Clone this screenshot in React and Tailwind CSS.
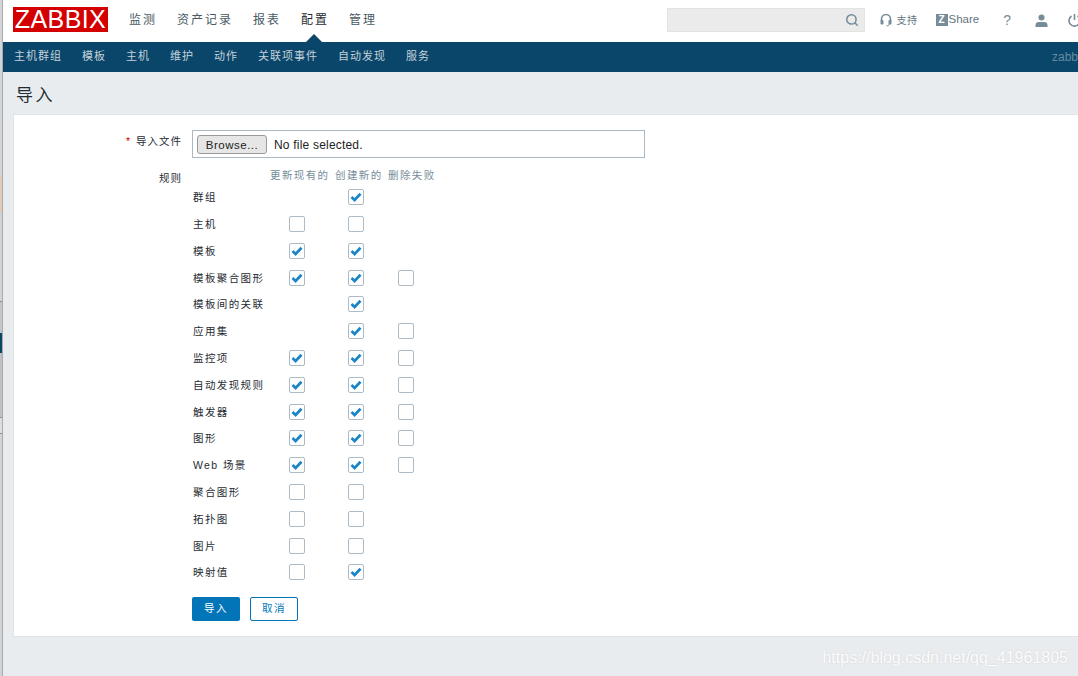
import { Search } from 'lucide-react';

const cjk = 'font-["Liberation_Sans","Noto_Sans_CJK_SC",sans-serif]';

const topNav = [
    { label: '监测' },
    { label: '资产记录' },
    { label: '报表' },
    { label: '配置', active: true },
    { label: '管理' },
];

const subNav = ['主机群组', '模板', '主机', '维护', '动作', '关联项事件', '自动发现', '服务'];

// null = no checkbox in that column
const rules = [
    ['群组', null, true, null],
    ['主机', false, false, null],
    ['模板', true, true, null],
    ['模板聚合图形', true, true, false],
    ['模板间的关联', null, true, null],
    ['应用集', null, true, false],
    ['监控项', true, true, false],
    ['自动发现规则', true, true, false],
    ['触发器', true, true, false],
    ['图形', true, true, false],
    ['Web 场景', true, true, false],
    ['聚合图形', false, false, null],
    ['拓扑图', false, false, null],
    ['图片', false, false, null],
    ['映射值', false, true, null],
];

const Checkbox = ({ checked, className }) => (
    <div className={`w-4 h-4 mb-[2px] bg-white border border-[#acbbc5] rounded-[2px] flex items-center justify-center ${className}`}>
        {checked && (
            <svg width="12" height="10" viewBox="0 0 12 10">
                <path d="M1.5 5 L4.6 8 L10.5 1.8" fill="none" stroke="#1a86c8" strokeWidth="2.7" />
            </svg>
        )}
    </div>
);

const LeftStrip = () => (
    <div className="w-[3px] shrink-0 h-full flex flex-col bg-[#c6c8ca] border-r border-[#a8aaac]">
        <div className="h-[177px] bg-[#d4d5d6]" />
        <div className="h-[36px] bg-[#e2cdb4]" />
        <div className="h-[88px] bg-[#d2d3d4]" />
        <div className="h-px bg-[#8f9192]" />
        <div className="h-[31px] bg-[#c4c6c8]" />
        <div className="h-[20px] bg-[#0c4566]" />
        <div className="h-[64px] bg-[#bfc1c3]" />
        <div className="h-px bg-[#8f9192]" />
        <div className="h-[15px] bg-[#dcdedf]" />
        <div className="h-px bg-[#8f9192]" />
        <div className="flex-1 bg-[#d2d3d4]" />
    </div>
);

const Header = () => (
    <div className="h-[42px] shrink-0 bg-white flex items-center pl-[10px] relative">
        <div className="w-[95px] h-[25px] mb-[3px] bg-[#d40000] text-white text-[25px] leading-[25px] text-center tracking-[0.4px] font-['Liberation_Sans',sans-serif]">
            ZABBIX
        </div>
        <div className={`flex gap-[20px] ml-[21px] pb-[2px] text-[12px] tracking-[2px] text-[#4a5a63] ${cjk}`}>
            {topNav.map((item) => (
                <span key={item.label} className={item.active ? 'text-[#1f2c33]' : ''}>{item.label}</span>
            ))}
        </div>
        {/* caret over the active menu item */}
        <div className="absolute left-[303px] bottom-0 w-0 h-0 border-x-[8px] border-x-transparent border-b-[8px] border-b-[#0a466a]" />

        <div className="ml-auto flex items-center mb-[2px]">
            <div className="w-[198px] h-[24px] bg-[#ebebeb] border border-[#e3e3e3] flex items-center justify-end pr-[5px]">
                <Search size={14} strokeWidth={2.6} className="text-[#768d99]" />
            </div>
            <svg className="ml-[15px]" width="12" height="14" viewBox="0 0 12 14">
                <path d="M1.5 8 V6 a4.5 4.5 0 0 1 9 0 V8" fill="none" stroke="#768d99" strokeWidth="1.6" />
                <rect x="0.5" y="7" width="3" height="4.5" rx="1" fill="#768d99" />
                <rect x="8.5" y="7" width="3" height="4.5" rx="1" fill="#768d99" />
                <path d="M9.5 11 Q9 13 6.5 13" fill="none" stroke="#768d99" strokeWidth="1" />
            </svg>
            <span className={`ml-[5px] text-[10px] tracking-[0.5px] text-[#5f7480] ${cjk}`}>支持</span>
            <div className="ml-[18px] w-[12px] h-[12px] bg-[#768d99] text-white text-[10px] leading-[12px] font-bold text-center font-['Liberation_Sans',sans-serif]">Z</div>
            <span className="ml-px text-[11.5px] text-[#5f7480] font-['Liberation_Sans',sans-serif]">Share</span>
            <span className="ml-[24px] text-[14px] text-[#768d99] font-['Liberation_Sans',sans-serif]">?</span>
            <svg className="ml-[24px]" width="13" height="13" viewBox="0 0 13 13">
                <circle cx="6.5" cy="3.5" r="3" fill="#768d99" />
                <path d="M0.5 13 V11 Q0.5 8.2 4 8 H9 Q12.5 8.2 12.5 11 V13 Z" fill="#768d99" />
            </svg>
            <div className="ml-[20px] w-[10px] overflow-hidden shrink-0">
                <svg width="13" height="14" viewBox="0 0 13 14">
                    <path d="M3.5 3 A5.5 5.5 0 1 0 9.5 3 M6.5 1 V7" fill="none" stroke="#768d99" strokeWidth="1.6" />
                </svg>
            </div>
        </div>
    </div>
);

const SubNav = () => (
    <div className="h-[30px] shrink-0 bg-[#0a466a] flex items-center pl-[11px]">
        <div className={`flex gap-[20px] pb-[2px] text-[11px] tracking-[1px] text-[#c4d2da] ${cjk}`}>
            {subNav.map((label) => (
                <span key={label}>{label}</span>
            ))}
        </div>
        <div className="ml-auto w-[26px] overflow-hidden text-[12px] text-[#668aa0] font-['Liberation_Sans',sans-serif]">zabbix</div>
    </div>
);

const ImportForm = () => (
    <div className="h-[523px] ml-[10px] bg-white border border-r-0 border-[#dfe4e7] pt-[15px] flex">
        <div className={`w-[168px] shrink-0 flex flex-col items-end text-[10.5px] tracking-[1px] text-[#1f2c33] ${cjk}`}>
            <div className="h-[28px] flex items-center pb-[4px]">
                <span className="text-[#d40000] mr-[5px]">*</span>导入文件
            </div>
            <div className="mt-[13px]">规则</div>
        </div>
        <div className="ml-[10px] flex flex-col">
            <div className="w-[453px] h-[28px] border border-[#a9b8c2] flex items-center pl-[4px]">
                <div className="w-[70px] h-[19px] bg-[#e6e6e6] border border-[#9a9a9a] rounded-[3px] text-[11.5px] tracking-[0.5px] text-[#222] text-center leading-[18px] font-['Liberation_Sans',sans-serif]">
                    Browse...
                </div>
                <span className="ml-[7px] pt-[2px] text-[12px] tracking-[0.2px] text-[#222] font-['Liberation_Sans',sans-serif]">No file selected.</span>
            </div>

            <div className={`mt-[10px] grid grid-cols-[78px_65px_53px_53px] text-[10.5px] tracking-[1.4px] text-[#768d99] ${cjk}`}>
                <div />
                <div>更新现有的</div>
                <div>创建新的</div>
                <div>删除失败</div>
            </div>

            <div className="mt-px">
                {rules.map(([label, update, create, remove]) => (
                    <div key={label} className="h-[26.8px] grid grid-cols-[78px_65px_53px_53px] items-center">
                        <div className={`pl-px text-[10.5px] tracking-[1.4px] text-[#1f2c33] ${cjk}`}>{label}</div>
                        <div>{update !== null && <Checkbox checked={update} className="ml-[19px]" />}</div>
                        <div>{create !== null && <Checkbox checked={create} className="ml-[13px]" />}</div>
                        <div>{remove !== null && <Checkbox checked={remove} className="ml-[10px]" />}</div>
                    </div>
                ))}
            </div>

            <div className={`mt-[10px] flex gap-[10px] text-[10.5px] tracking-[1.5px] ${cjk}`}>
                <button className="w-[48px] h-[24px] bg-[#0275b8] text-white rounded-[2px]">导入</button>
                <button className="w-[48px] h-[24px] bg-white border border-[#0275b8] text-[#0275b8] rounded-[2px]">取消</button>
            </div>
        </div>
    </div>
);

export default function App() {
    return (
        <div className="w-[1078px] h-[676px] overflow-hidden flex bg-[#e9ecef] relative">
            <LeftStrip />
            <div className="flex-1 min-w-0 flex flex-col">
                <Header />
                <SubNav />
                <div className={`h-[42px] shrink-0 flex items-center pl-[13px] pt-[6px] text-[17px] tracking-[2.5px] text-[#1f2c33] ${cjk}`}>导入</div>
                <ImportForm />
            </div>
            {/* csdn watermark */}
            <div className="absolute right-[10px] bottom-[6px] text-[16px] text-white/90 [text-shadow:0_0_2px_rgba(0,0,0,0.12)] font-['Liberation_Sans',sans-serif]">
                https://blog.csdn.net/qq_41961805
            </div>
        </div>
    );
}
